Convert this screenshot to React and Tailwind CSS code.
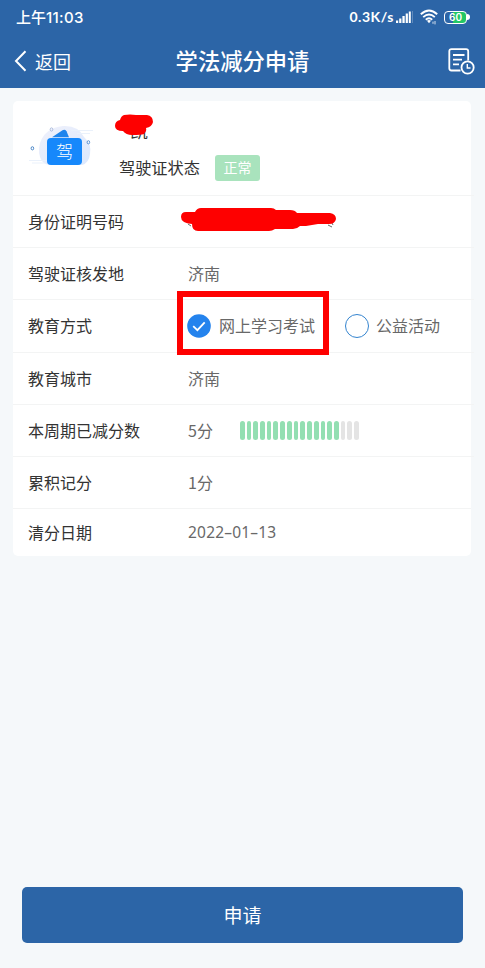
const BAR_COUNT = 18;
const BAR_FILLED = 15;

function StatusBar() {
  return (
    <div className="flex h-[35px] items-center justify-between pl-4 pr-[15px] font-medium">
      <span className="flex items-baseline pb-[2px] text-[15px] leading-none">
        上午<span className="font-['Inter'] text-[15px] font-medium tracking-[0.3px]">11:03</span>
      </span>
      <div className="flex items-center pb-px">
        <span className="font-['Lato',sans-serif] text-[14px] font-bold leading-none tracking-[0.55px]">0.3K/s</span>
        <svg className="ml-[2px]" width="18" height="12" viewBox="0 0 18 12" fill="currentColor">
          <path d="M0 9.5h2.2V12H0zM3.2 7.5h2.2V12H3.2zM6.4 5h2.3v7H6.4zM9.7 2.5h2.2V12H9.7zM12.8 0.5h2v11.5h-2z" />
          <path d="M16 0h1v12h-1z" opacity="0.25" />
        </svg>
        <svg className="ml-[6px]" width="18" height="16" viewBox="0 0 18 16" fill="none" stroke="currentColor" strokeWidth="1.9">
          <path d="M0.8 5.2Q9 -2.4 17.2 5.2M3.2 8.1Q9 2.8 14.8 8.1M5.8 10.8Q9 7.8 12.2 10.8" />
          <path d="M7 11.8Q9 10.4 11 11.8L9 14.2Z" fill="currentColor" stroke="none" />
          <path d="M13 12.6v2.2M15 12v3.4" strokeWidth="0.8" />
        </svg>
        <span className="ml-[6px] flex items-center">
          <span className="flex h-[13px] w-[23px] items-center justify-center rounded-[4px] border-[1.5px] border-white bg-[linear-gradient(90deg,#2c65a7_40%,#23c765_40%)] font-['Inter'] text-[10px] font-semibold leading-none">
            60
          </span>
          <span className="h-[6px] w-[3px] rounded-r bg-white" />
        </span>
      </div>
    </div>
  );
}

function TitleBar() {
  return (
    <div className="grid h-[53px] grid-cols-3 items-center pb-px">
      <div className="flex items-center pl-[14px] text-[18px]">
        <svg className="mr-[8px]" width="13" height="22" viewBox="0 0 13 22" fill="none" stroke="currentColor" strokeWidth="2">
          <path d="M11.5 1.2L2 11l9.5 9.8" />
        </svg>
        返回
      </div>
      <h1 className="whitespace-nowrap text-center text-[22.3px] font-medium">学法减分申请</h1>
      <svg className="mr-[10px] justify-self-end" width="27" height="27" viewBox="0 0 27 27" fill="none" stroke="currentColor" strokeWidth="1.8">
        <path d="M12.5 22.5H3.5Q1.3 22.5 1.3 20.3V3.3Q1.3 1.1 3.5 1.1H18Q20.2 1.1 20.2 3.3V12.5M5 7h11.5M5 11.7h9M5 16.4h6" />
        <circle cx="19.6" cy="19.5" r="6.1" />
        <path d="M19.3 16v4h3.2" strokeWidth="1.4" />
      </svg>
    </div>
  );
}

function LicenseIcon() {
  return (
    <div className="relative ml-[14px] h-[44px] w-[68px]">
      <svg className="absolute left-0 top-[-2px]" width="68" height="44" viewBox="0 0 68 44">
        <defs>
          <linearGradient id="halo" x1="0" y1="0" x2="1" y2="1">
            <stop offset="0" stopColor="#f0f1fb" />
            <stop offset="1" stopColor="#dbe8fd" />
          </linearGradient>
        </defs>
        <path d="M15 37Q10 29 13 19Q18 4 36 2Q51 1 57 13Q65 20 63 30Q62 39 55 41H24Q18 41 15 37Z" fill="url(#halo)" />
        <path d="M44 6.5H66M50 9.5H63M2 36.5H20M5 39H18" stroke="#eaf1fb" strokeWidth="1" />
        <path d="M25 13.2L35.5 6.3Q37.8 5 39.5 7.2L42 13.2Z" fill="#1d84ed" />
        <g fill="none" strokeWidth="1">
          <ellipse cx="24.5" cy="5.5" rx="1.3" ry="1.6" stroke="#a9b9dc" />
          <ellipse cx="5.4" cy="24.3" rx="1.3" ry="1.6" stroke="#4b87c8" />
          <ellipse cx="61.4" cy="18.3" rx="1.3" ry="1.6" stroke="#5c93d4" />
        </g>
      </svg>
      <span className="absolute left-[20px] top-[12px] flex h-[27px] w-[35px] items-center justify-center rounded-[4px] bg-[#1688fb] pb-[2px] text-[17px] font-light leading-none text-white">
        驾
      </span>
    </div>
  );
}

function Profile() {
  return (
    <div className="flex h-[94px] items-center">
      <LicenseIcon />
      <div className="ml-[24px] flex flex-col">
        <div className="relative flex h-[39px] pl-[11px] pt-px text-[18px] leading-[26px] text-[#333]">
          凯
          <svg className="absolute left-[-5px] top-[-2px]" width="40" height="24" viewBox="0 0 40 24" fill="#fe0000">
            <path d="M10 1Q16 0 22 1H33Q39 2 39 8Q38 13 32 14Q33 17 30 20Q27 21 18 21Q12 21 9 17Q1 17 1 12Q1 7 6 6Q7 2 10 1Z" />
          </svg>
        </div>
        <div className="flex items-center text-[16.2px] leading-[24px] text-[#333]">
          <span className="pb-[2px]">驾驶证状态</span>
          <span className="ml-[15px] flex h-[26px] w-[45px] items-center justify-center rounded-[3px] bg-[#a9e3bd] pb-px text-[14px] text-white">正常</span>
        </div>
      </div>
    </div>
  );
}

function Row({ label, height = 'h-[52px]', last, children }) {
  return (
    <div className={`${height} ${last ? '' : 'mr-[-3px]'} flex items-center border-t border-[#f3f4f4] pb-[2px] pl-[15px] text-[16px]`}>
      <span className="w-[160px] shrink-0 text-[#333]">{label}</span>
      <div className="flex items-center text-[#686868]">{children}</div>
    </div>
  );
}

function HiddenNumber() {
  return (
    <svg className="-ml-[8px] -mt-[2px]" width="158" height="26" viewBox="0 0 158 26">
      <path d="M8 17l3 2M148 18l4 2M152 16l1 2" stroke="#666" strokeWidth="1" />
      <path
        d="M6 5H15Q17 1 21 1H91Q94 1 96 3H110Q115 3 117 6H150Q156 7 156 12Q155 17 149 17H138L126 19H120Q117 22 113 22H95Q92 24 89 24H18Q12 24 12 17Q1 16 1 10Q1 5 6 5Z"
        fill="#fe0000"
      />
    </svg>
  );
}

function EducationMode() {
  return (
    <div className="relative flex items-center">
      {/* marker around the selected option */}
      <div className="absolute left-[-11px] top-[-21px] h-[64px] w-[152px] border-[6px] border-[#fe0000]" />
      <svg className="-ml-px mt-[2px]" width="24" height="24" viewBox="0 0 24 24">
        <circle cx="12" cy="12" r="11.8" fill="#2483ed" />
        <path d="M6.2 12.2l4.2 4 7.3-7.8" fill="none" stroke="#fff" strokeWidth="1.8" />
      </svg>
      <span className="ml-[8px]">网上学习考试</span>
      <span className="ml-[30px] mt-[2px] h-[24px] w-[24px] rounded-full border-[1.5px] border-[#3484cf]" />
      <span className="ml-[7px]">公益活动</span>
    </div>
  );
}

function ScoreBars() {
  return (
    <div className="ml-[27px] mt-px flex gap-[2px]">
      {Array.from({ length: BAR_COUNT }, (_, i) => (
        <span key={i} className={`h-[19px] w-[4.72px] rounded-full ${i < BAR_FILLED ? 'bg-[#93dfb2]' : 'bg-[#e4e4e4]'}`} />
      ))}
    </div>
  );
}

export default function App() {
  return (
    <div className="flex h-[968px] w-[485px] flex-col overflow-hidden bg-[#f5f8fa] font-['Noto_Sans_CJK_SC',sans-serif]">
      <header className="h-[88px] bg-[#2c65a7] text-white">
        <StatusBar />
        <TitleBar />
      </header>

      <main className="ml-[13px] mr-[14px] mt-[13px] rounded-[5px] bg-white">
        <Profile />
        <Row label="身份证明号码"><HiddenNumber /></Row>
        <Row label="驾驶证核发地">济南</Row>
        <Row label="教育方式" height="h-[53px]"><EducationMode /></Row>
        <Row label="教育城市">济南</Row>
        <Row label="本周期已减分数">
          <span>5分</span>
          <ScoreBars />
        </Row>
        <Row label="累积记分">1分</Row>
        <Row label="清分日期" height="h-[48px]" last>
          <span className="pt-[2px] font-['Noto_Sans',sans-serif] text-[15.5px] tracking-[0.2px]">2022–01–13</span>
        </Row>
      </main>

      <button className="mx-[22px] mb-[25px] mt-auto h-[56px] rounded-[5px] bg-[#2c65a7] text-[19px] text-white">
        申请
      </button>
    </div>
  );
}
